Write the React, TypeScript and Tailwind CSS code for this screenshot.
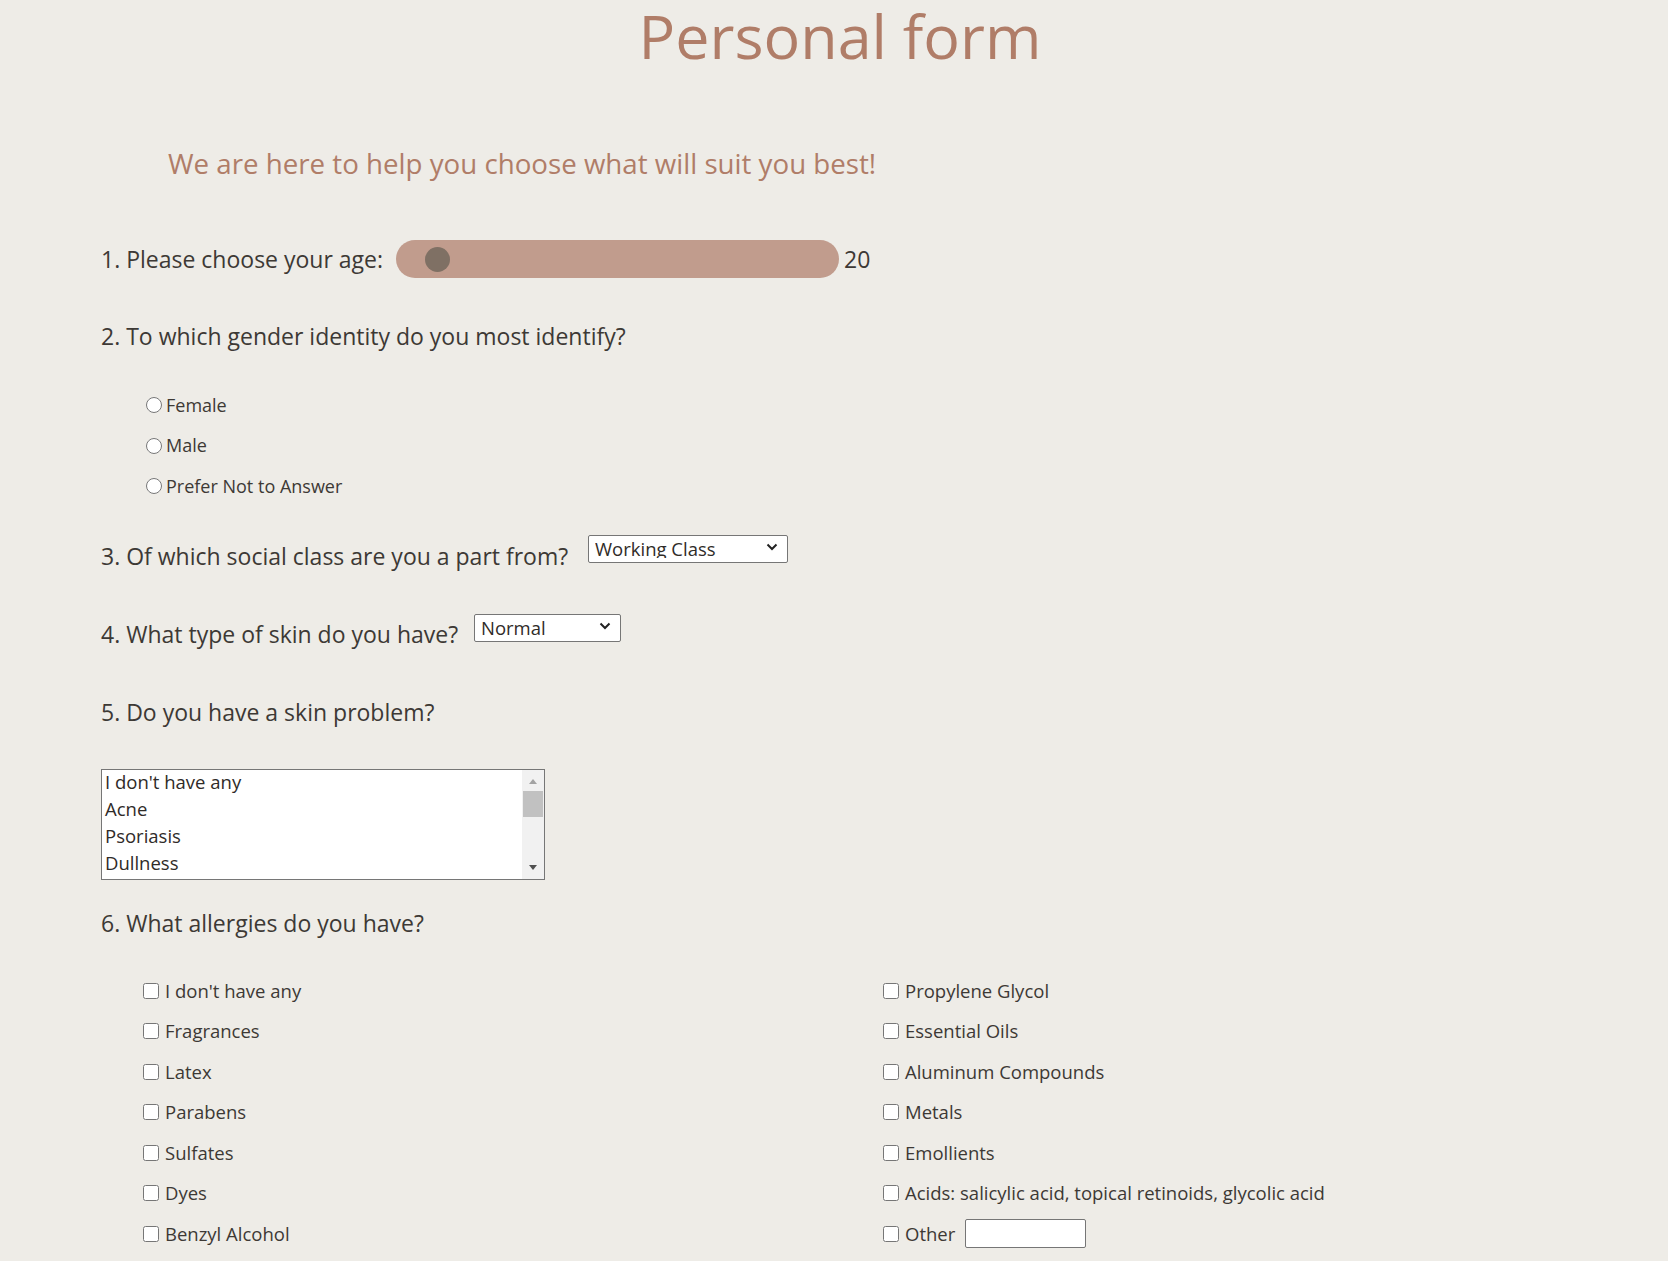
import React from 'react'

const leftAllergies = ["I don't have any", 'Fragrances', 'Latex', 'Parabens', 'Sulfates', 'Dyes', 'Benzyl Alcohol']
const rightAllergies = [
  'Propylene Glycol',
  'Essential Oils',
  'Aluminum Compounds',
  'Metals',
  'Emollients',
  'Acids: salicylic acid, topical retinoids, glycolic acid',
]
const skinProblems = ["I don't have any", 'Acne', 'Psoriasis', 'Dullness']

const Chevron = () => (
  <svg
    width="12"
    height="8"
    viewBox="0 0 12 8"
    className="pointer-events-none absolute top-1/2 right-[10px] -translate-y-1/2"
  >
    <path d="M1.5 1.5 L6 6 L10.5 1.5" fill="none" stroke="#222" strokeWidth="2" />
  </svg>
)

const FakeSelect = ({ value, width }: { value: string; width: string }) => (
  <div className={`relative ${width}`}>
    <select
      defaultValue={value}
      className="h-[28px] w-full appearance-none rounded-[2px] border border-[#767676] bg-white pl-[6px] text-[18.5px] leading-none text-[#2f2b28]"
    >
      <option>{value}</option>
    </select>
    <Chevron />
  </div>
)

const CheckRow = ({ label }: { label: string }) => (
  <label className="flex h-[40.5px] items-center gap-[6px]">
    <input type="checkbox" className="m-0 h-4 w-4" />
    <span>{label}</span>
  </label>
)

export default function App() {
  return (
    <div className="min-h-screen bg-[#eeece7] font-['Open_Sans',sans-serif] text-[#3d3935]">
      <div className="flex h-[72px] items-center justify-center pl-[12px]">
        <h1 className="text-[61px] leading-[72px] text-[#b07d68]">Personal form</h1>
      </div>

      <p className="mt-[71px] h-[40px] pl-[168px] text-[27.7px] leading-[40px] text-[#b07d68]">
        We are here to help you choose what will suit you best!
      </p>

      <form className="pl-[101px] text-[23px]">
        <div className="mt-[57px] flex h-[38px] items-center">
          <span className="w-[295px]">1. Please choose your age:</span>
          <div className="flex h-[38px] w-[443px] items-center rounded-full bg-[#c19c8d] pl-[29px]">
            <div className="h-[25px] w-[25px] rounded-full bg-[#7f7064]" />
          </div>
          <span className="ml-[5px]">20</span>
        </div>

        <div className="mt-[38px] h-[40px] leading-[40px]">2. To which gender identity do you most identify?</div>

        <div className="mt-[29px] pl-[45px] text-[18px]">
          {['Female', 'Male', 'Prefer Not to Answer'].map((g) => (
            <label key={g} className="flex h-[40.5px] items-center gap-[4px]">
              <input type="radio" name="gender" className="m-0 h-4 w-4" />
              <span>{g}</span>
            </label>
          ))}
        </div>

        <div className="mt-[23px] flex items-start">
          <span className="w-[487px] leading-[52px]">3. Of which social class are you a part from?</span>
          <FakeSelect value="Working Class" width="w-[200px]" />
        </div>

        <div className="mt-[27px] flex items-start">
          <span className="w-[373px] leading-[50px]">4. What type of skin do you have?</span>
          <FakeSelect value="Normal" width="w-[147px]" />
        </div>

        <div className="mt-[33px] h-[40px] leading-[40px]">5. Do you have a skin problem?</div>

        <div className="mt-[37px] flex h-[111px] w-[444px] border border-[#767676] bg-white text-[18.5px] text-[#2f2b28]">
          <ul className="-mt-[2px] flex-1 pl-[3px]">
            {skinProblems.map((p) => (
              <li key={p} className="h-[27.3px] leading-[27.3px]">
                {p}
              </li>
            ))}
          </ul>
          <div className="flex w-[22px] flex-col items-center bg-[#f1f1f1]">
            <svg width="10" height="14" viewBox="0 0 10 14" className="mt-[4px]">
              <path d="M1 10 L5 5 L9 10 Z" fill="#a3a3a3" />
            </svg>
            <div className="mt-[3px] h-[26px] w-[20px] bg-[#c1c1c1]" />
            <div className="flex-1" />
            <svg width="10" height="14" viewBox="0 0 10 14" className="mb-[4px]">
              <path d="M1 4 L5 9 L9 4 Z" fill="#505050" />
            </svg>
          </div>
        </div>

        <div className="mt-[23px] h-[40px] leading-[40px]">6. What allergies do you have?</div>

        <div className="mt-[28px] grid grid-cols-[740px_1fr] pl-[42px] text-[18.5px]">
          <div>
            {leftAllergies.map((a) => (
              <CheckRow key={a} label={a} />
            ))}
          </div>
          <div>
            {rightAllergies.map((a) => (
              <CheckRow key={a} label={a} />
            ))}
            <label className="flex h-[40.5px] items-center gap-[6px]">
              <input type="checkbox" className="m-0 h-4 w-4" />
              <span>Other</span>
              <input type="text" className="ml-[4px] h-[29px] w-[121px] rounded-[2px] border border-[#767676] bg-white" />
            </label>
          </div>
        </div>
      </form>
    </div>
  )
}
